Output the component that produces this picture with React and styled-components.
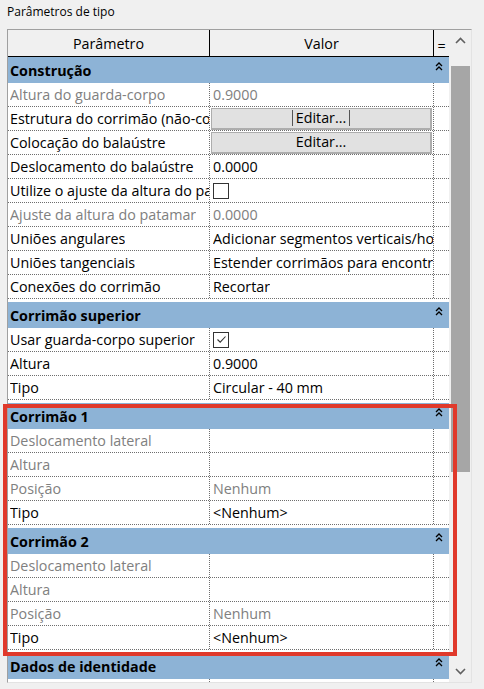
import React from 'react'
import styled, { createGlobalStyle } from 'styled-components'

const GlobalStyle = createGlobalStyle`
  html, body {
    margin: 0;
    padding: 0;
    background: #f0f0f0;
  }
  body {
    font-family: 'Open Sans', 'Noto Sans', 'Liberation Sans', sans-serif;
    color: #000;
  }
`

const sections = [
  {
    title: 'Construção',
    rows: [
      { label: 'Altura do guarda-corpo', value: '0.9000', disabled: true },
      { label: 'Estrutura do corrimão (não-contínuo)', button: 'Editar...', focus: true },
      { label: 'Colocação do balaústre', button: 'Editar...' },
      { label: 'Deslocamento do balaústre', value: '0.0000' },
      { label: 'Utilize o ajuste da altura do patamar', check: false },
      { label: 'Ajuste da altura do patamar', value: '0.0000', disabled: true },
      { label: 'Uniões angulares', value: 'Adicionar segmentos verticais/horizontais' },
      { label: 'Uniões tangenciais', value: 'Estender corrimãos para encontrar' },
      { label: 'Conexões do corrimão', value: 'Recortar' },
    ],
  },
  {
    title: 'Corrimão superior',
    rows: [
      { label: 'Usar guarda-corpo superior', check: true },
      { label: 'Altura', value: '0.9000' },
      { label: 'Tipo', value: 'Circular - 40 mm' },
    ],
  },
  {
    title: 'Corrimão 1',
    marked: true,
    rows: [
      { label: 'Deslocamento lateral', value: '', disabled: true },
      { label: 'Altura', value: '', disabled: true },
      { label: 'Posição', value: 'Nenhum', disabled: true },
      { label: 'Tipo', value: '<Nenhum>' },
    ],
  },
  {
    title: 'Corrimão 2',
    marked: true,
    rows: [
      { label: 'Deslocamento lateral', value: '', disabled: true },
      { label: 'Altura', value: '', disabled: true },
      { label: 'Posição', value: 'Nenhum', disabled: true },
      { label: 'Tipo', value: '<Nenhum>' },
    ],
  },
  {
    title: 'Dados de identidade',
    rows: [{ label: 'Modelo', value: '' }],
  },
]

const Collapse = () => (
  <svg width="8" height="9" viewBox="0 0 8 9">
    <path d="M1 4 L4 1 L7 4 M1 8 L4 5 L7 8" fill="none" stroke="#000" strokeWidth="1.3" />
  </svg>
)

const Chevron = ({ down }) => (
  <svg width="11" height="7" viewBox="0 0 11 7">
    <path
      d={down ? 'M1 1 L5.5 5.5 L10 1' : 'M1 6 L5.5 1.5 L10 6'}
      fill="none"
      stroke="#606060"
      strokeWidth="1.6"
    />
  </svg>
)

const Tick = () => (
  <svg width="13" height="13" viewBox="0 0 13 13">
    <path d="M2.5 6.5 L5.2 9.2 L10.5 3.5" fill="none" stroke="#333" strokeWidth="1.1" />
  </svg>
)

const Row = ({ row }) => {
  let value
  if (row.button) {
    value = (
      <EditButton>
        <FocusText $focus={row.focus}>{row.button}</FocusText>
      </EditButton>
    )
  } else if (row.check !== undefined) {
    value = <CheckBox>{row.check && <Tick />}</CheckBox>
  } else {
    value = <Text>{row.value}</Text>
  }
  return (
    <DataRow $disabled={row.disabled}>
      <LabelCell><Text>{row.label}</Text></LabelCell>
      <ValueCell $flat={row.button}>{value}</ValueCell>
      <EqCell />
    </DataRow>
  )
}

const Section = ({ section, first }) => (
  <>
    <Category $first={first}>
      <span>{section.title}</span>
      <CollapseBox><Collapse /></CollapseBox>
    </Category>
    {section.rows.map((r, i) => <Row key={i} row={r} />)}
  </>
)

export default function App() {
  const before = sections.slice(0, 2)
  const marked = sections.filter(s => s.marked)
  const after = sections.slice(4)
  return (
    <>
      <GlobalStyle />
      <Title>Parâmetros de tipo</Title>
      <Panel>
        <Grid>
          <Header>
            <HeadCell>Parâmetro</HeadCell>
            <HeadCell>Valor</HeadCell>
            <HeadEq>=</HeadEq>
          </Header>
          {before.map((s, i) => <Section key={s.title} section={s} first={i === 0} />)}
          <Highlight>
            {marked.map(s => <Section key={s.title} section={s} />)}
          </Highlight>
          {after.map(s => <Section key={s.title} section={s} />)}
        </Grid>
        <Scrollbar>
          <ScrollButton><Chevron /></ScrollButton>
          <Track>
            <Thumb />
          </Track>
          <ScrollButton><Chevron down /></ScrollButton>
        </Scrollbar>
      </Panel>
    </>
  )
}

const Title = styled.div`
  height: 29px;
  padding: 4px 0 0 7px;
  box-sizing: border-box;
  font-size: 12px;
  line-height: 16px;
`

const Panel = styled.div`
  display: flex;
  margin-left: 7px;
  width: 465px;
  height: 654px;
  box-sizing: border-box;
  border-top: 1px solid #a0a0a0;
  border-left: 1px solid #a0a0a0;
  border-right: 1px solid #e3e3e3;
  border-bottom: 1px solid #e3e3e3;
`

/* clip only at top and bottom so the red mark may spill over the sides */
const Grid = styled.div`
  width: 441px;
  height: 100%;
  overflow: visible;
  clip-path: inset(0 -12px 0 -8px);
  background: #fff;
  font-size: 14.3px;
`

const Header = styled.div`
  display: grid;
  grid-template-columns: 202px 224px 15px;
  height: 27px;
  box-sizing: border-box;
  background: #f0f0f0;
  border-bottom: 1px solid #000;
`

const HeadCell = styled.div`
  display: flex;
  align-items: center;
  justify-content: center;
  border-right: 1px solid #000;
`

const HeadEq = styled.div`
  display: flex;
  align-items: flex-end;
  justify-content: center;
  padding-bottom: 2px;
  line-height: 16px;
`

const Category = styled.div`
  display: flex;
  align-items: center;
  justify-content: space-between;
  height: 26px;
  margin-top: ${p => (p.$first ? '0' : '3px')};
  padding-left: 2px;
  background: #8db3d6;
  font-weight: 700;
`

const CollapseBox = styled.div`
  align-self: flex-start;
  padding: 5px 6px 0 0;
  line-height: 0;
`

const DataRow = styled.div`
  display: grid;
  grid-template-columns: 202px 224px 15px;
  height: 24px;
  box-sizing: border-box;
  border-bottom: 1px dotted #6e6e6e;
  color: ${p => (p.$disabled ? '#808080' : '#000')};
`

const LabelCell = styled.div`
  display: flex;
  align-items: center;
  padding-left: 2px;
  overflow: hidden;
  border-right: 1px dotted #6e6e6e;
`

const ValueCell = styled.div`
  display: flex;
  align-items: center;
  padding-left: ${p => (p.$flat ? '1px' : '3px')};
  padding-right: ${p => (p.$flat ? '1px' : '0')};
  overflow: hidden;
  border-right: 1px dotted #6e6e6e;
`

const EqCell = styled.div``

const Text = styled.span`
  white-space: nowrap;
  overflow: hidden;
`

const EditButton = styled.div`
  flex: 1;
  height: 22px;
  box-sizing: border-box;
  display: flex;
  align-items: center;
  justify-content: center;
  background: #e1e1e1;
  border: 1px solid #adadad;
  border-bottom-width: 2px;
  border-right-width: 2px;
`

const FocusText = styled.span`
  padding: 0 3px;
  line-height: 16px;
  border-left: 1px solid ${p => (p.$focus ? '#555' : 'transparent')};
  border-right: 1px solid ${p => (p.$focus ? '#555' : 'transparent')};
`

const CheckBox = styled.div`
  width: 16px;
  height: 16px;
  box-sizing: border-box;
  border: 1px solid #333;
  background: #fff;
  display: flex;
  align-items: center;
  justify-content: center;
`

const Highlight = styled.div`
  position: relative;
  &::after {
    content: '';
    position: absolute;
    top: 1px;
    left: -5px;
    right: -8px;
    bottom: -6px;
    border: 4px solid #e0392b;
    pointer-events: none;
  }
`

const Scrollbar = styled.div`
  display: flex;
  flex-direction: column;
  width: 22px;
  background: #f0f0f0;
`

const ScrollButton = styled.div`
  height: 21px;
  display: flex;
  align-items: center;
  justify-content: center;
`

const Track = styled.div`
  flex: 1;
  padding: 15px 1px 0 2px;
`

const Thumb = styled.div`
  height: 406px;
  background: #a6a6a6;
`
